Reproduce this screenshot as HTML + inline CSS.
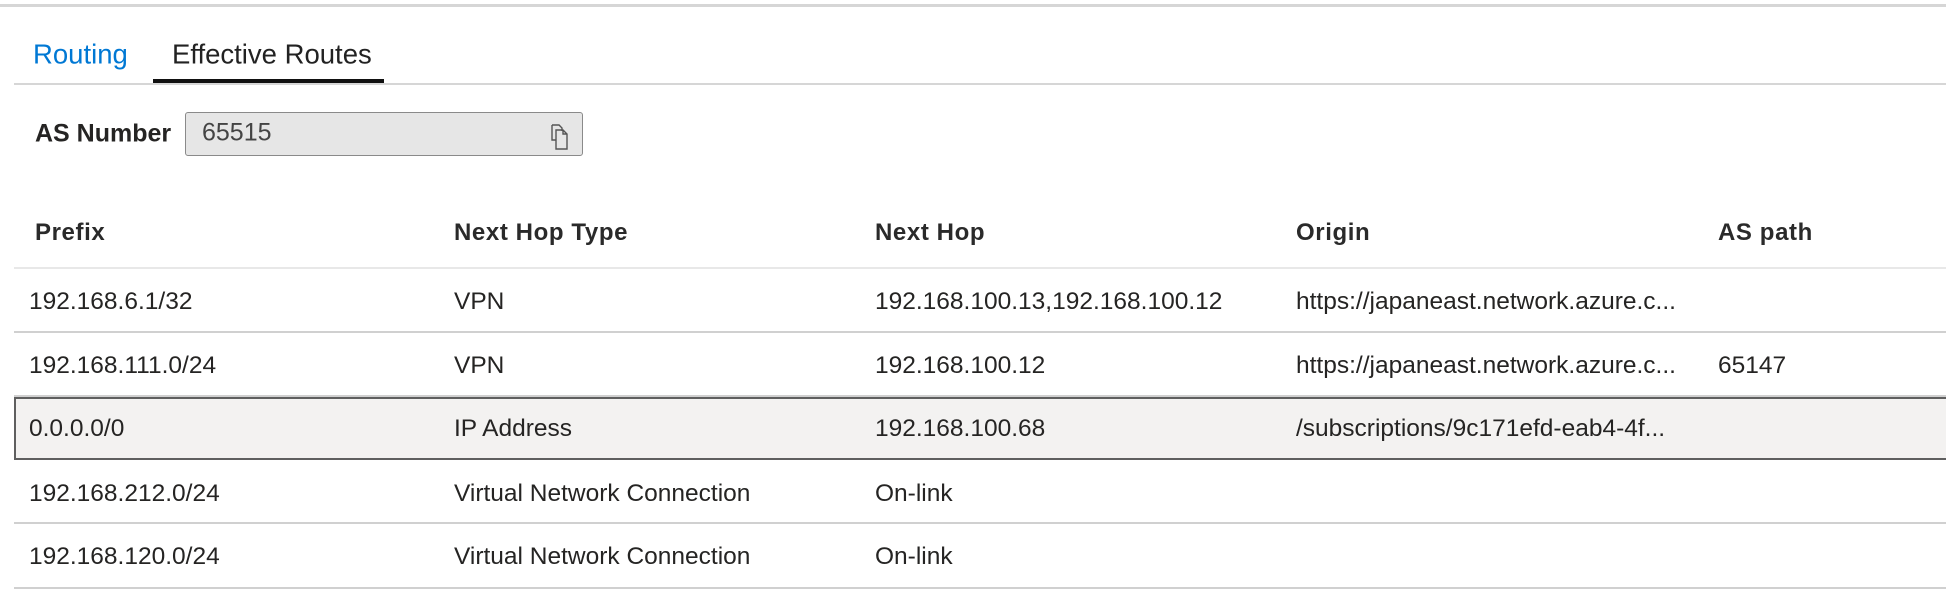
<!DOCTYPE html>
<html><head><style>
html,body{margin:0;padding:0;background:#fff;}
body{width:1946px;height:599px;position:relative;overflow:hidden;font-family:"Liberation Sans",sans-serif;color:#252423;}
.a{position:absolute;white-space:nowrap;line-height:1;}
.t{font-size:24.5px;transform:translateY(-50%);}
.h{font-size:24px;font-weight:bold;letter-spacing:0.6px;transform:translateY(-50%);color:#2a2a2a;}
.ln{position:absolute;left:14px;right:0;height:2px;background:#d0d0d0;}
</style></head><body>
<div style="position:absolute;left:0;right:0;top:4px;height:3px;background:#d6d6d6"></div>
<div class="a" style="left:33px;top:54px;font-size:27.5px;color:#0078d4;transform:translateY(-50%)">Routing</div>
<div class="a" style="left:172px;top:54px;font-size:27.5px;color:#222;transform:translateY(-50%)">Effective Routes</div>
<div style="position:absolute;left:14px;right:0;top:83px;height:2px;background:#d6d6d6"></div>
<div style="position:absolute;left:153px;width:231px;top:79px;height:4px;background:#111"></div>

<div class="a" style="left:35px;top:134px;font-size:25px;font-weight:bold;transform:translateY(-50%)">AS Number</div>
<div style="position:absolute;left:185px;top:112px;width:396px;height:42px;background:#e6e6e6;border:1px solid #8a8a8a;border-radius:3px"></div>
<div class="a" style="left:202px;top:133px;font-size:25px;color:#444;transform:translateY(-50%)">65515</div>
<svg style="position:absolute;left:550px;top:124px" width="20" height="26" viewBox="0 0 20 26" fill="none" stroke="#555" stroke-width="1.4">
<path d="M2 1h7l3 3v3 M2 1v15h4"/><path d="M6 6h7l4 4v15h-11z M13 6v4h4"/></svg>

<div class="a h" style="left:35px;top:233px">Prefix</div>
<div class="a h" style="left:454px;top:233px">Next Hop Type</div>
<div class="a h" style="left:875px;top:233px">Next Hop</div>
<div class="a h" style="left:1296px;top:233px">Origin</div>
<div class="a h" style="left:1718px;top:233px">AS path</div>
<div class="ln" style="top:267px;background:#e8e8e8"></div>

<div class="a t" style="left:29px;top:302px">192.168.6.1/32</div>
<div class="a t" style="left:454px;top:302px">VPN</div>
<div class="a t" style="left:875px;top:302px">192.168.100.13,192.168.100.12</div>
<div class="a t" style="left:1296px;top:302px">https://japaneast.network.azure.c...</div>
<div class="ln" style="top:331px"></div>

<div class="a t" style="left:29px;top:366px">192.168.111.0/24</div>
<div class="a t" style="left:454px;top:366px">VPN</div>
<div class="a t" style="left:875px;top:366px">192.168.100.12</div>
<div class="a t" style="left:1296px;top:366px">https://japaneast.network.azure.c...</div>
<div class="a t" style="left:1718px;top:366px">65147</div>
<div class="ln" style="top:395px"></div>

<div style="position:absolute;left:14px;right:-3px;top:397px;height:59px;background:#f3f2f1;border:2px solid #5f5f5f"></div>
<div class="a t" style="left:29px;top:429px">0.0.0.0/0</div>
<div class="a t" style="left:454px;top:429px">IP Address</div>
<div class="a t" style="left:875px;top:429px">192.168.100.68</div>
<div class="a t" style="left:1296px;top:429px">/subscriptions/9c171efd-eab4-4f...</div>

<div class="a t" style="left:29px;top:494px">192.168.212.0/24</div>
<div class="a t" style="left:454px;top:494px">Virtual Network Connection</div>
<div class="a t" style="left:875px;top:494px">On-link</div>
<div class="ln" style="top:522px"></div>

<div class="a t" style="left:29px;top:557px">192.168.120.0/24</div>
<div class="a t" style="left:454px;top:557px">Virtual Network Connection</div>
<div class="a t" style="left:875px;top:557px">On-link</div>
<div class="ln" style="top:587px"></div>
</body></html>
